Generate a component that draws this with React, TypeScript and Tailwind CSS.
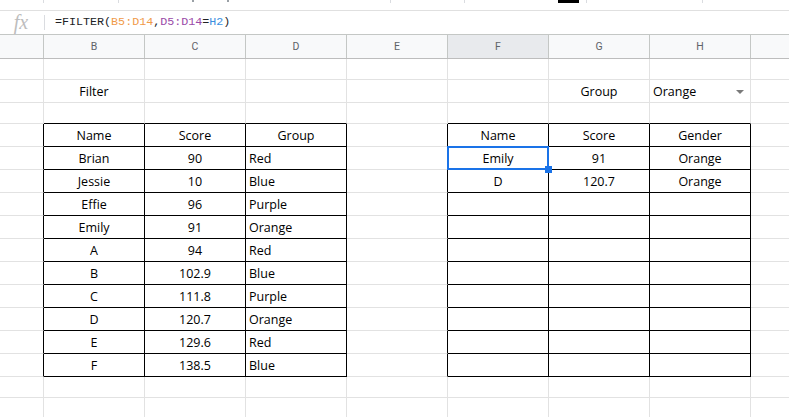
import React from "react";

const COLS = ["", "B", "C", "D", "E", "F", "G", "H", ""];
const GRID = "grid grid-cols-[44px_101px_101px_101px_101px_101px_101px_101px_1fr]";

type Cell = { text?: string; align?: "center" | "left"; dropdown?: boolean; selected?: boolean };

const names = ["Brian", "Jessie", "Effie", "Emily", "A", "B", "C", "D", "E", "F"];
const scores = ["90", "10", "96", "91", "94", "102.9", "111.8", "120.7", "129.6", "138.5"];
const groups = ["Red", "Blue", "Purple", "Orange", "Red", "Blue", "Purple", "Orange", "Red", "Blue"];

function buildRows() {
  const rows: { n: number; h: string; cells: Cell[] }[] = [];
  for (let n = 1; n <= 16; n++) {
    const cells: Cell[] = Array.from({ length: 9 }, () => ({}));
    if (n === 2) {
      cells[1] = { text: "Filter", align: "center" };
      cells[6] = { text: "Group", align: "center" };
      cells[7] = { text: "Orange", align: "left", dropdown: true };
    }
    if (n === 4) {
      cells[1] = { text: "Name", align: "center" };
      cells[2] = { text: "Score", align: "center" };
      cells[3] = { text: "Group", align: "center" };
      cells[5] = { text: "Name", align: "center" };
      cells[6] = { text: "Score", align: "center" };
      cells[7] = { text: "Gender", align: "center" };
    }
    if (n >= 5 && n <= 14) {
      const i = n - 5;
      cells[1] = { text: names[i], align: "center" };
      cells[2] = { text: scores[i], align: "center" };
      cells[3] = { text: groups[i], align: "left" };
    }
    if (n === 5) {
      cells[5] = { text: "Emily", align: "center", selected: true };
      cells[6] = { text: "91", align: "center" };
      cells[7] = { text: "Orange", align: "center" };
    }
    if (n === 6) {
      cells[5] = { text: "D", align: "center" };
      cells[6] = { text: "120.7", align: "center" };
      cells[7] = { text: "Orange", align: "center" };
    }
    const h = n === 2 || (n >= 4 && n <= 14) ? "h-[23px]" : "h-[21px]";
    rows.push({ n, h, cells });
  }
  return rows;
}

const rows = buildRows();

export default function App() {
  return (
    <div className="w-[789px] h-[417px] overflow-hidden bg-white font-['Open_Sans',sans-serif] text-black">
      {/* top toolbar remnants */}
      <div className="h-[10px] flex items-start">
        <div className="w-[44px] h-[3px] border-r border-[#dadce0]" />
        <div className="w-[75px] h-[3px] border-r border-[#dadce0]" />
        <div className="w-[73px] h-[3px]" />
        <div className="w-[2px] h-[2px] bg-[#9aa0a6]" />
        <div className="w-[33px] h-[3px]" />
        <div className="w-[2px] h-[2px] bg-[#9aa0a6]" />
        <div className="w-[162px] h-[3px] border-r border-[#dadce0]" />
        <div className="w-[74px] h-[3px] border-r border-[#dadce0]" />
        <div className="w-[93px] h-[3px]" />
        <div className="w-[21px] h-[3px] bg-black" />
        <div className="w-[8px] h-[3px] border-r border-[#dadce0]" />
        <div className="w-[116px] h-[3px] border-r border-[#dadce0]" />
      </div>

      {/* formula bar */}
      <div className="h-[24px] border-t border-[#e0e0e0] flex items-center">
        <div className="w-[44px] flex items-center justify-center">
          <span className="font-['Liberation_Serif',serif] italic text-[20px] leading-none text-[#bdbdbd] -mt-[2px] pr-[2px]">fx</span>
        </div>
        <div className="w-px h-[15px] bg-[#dadce0]" />
        <div className="pl-[10px] font-['Liberation_Mono',monospace] text-[11.7px] text-[#202124] whitespace-pre">
          <span>=FILTER(</span>
          <span className="text-[#f09a48]">B5:D14</span>
          <span>,</span>
          <span className="text-[#9a4aa8]">D5:D14</span>
          <span>=</span>
          <span className="text-[#3b8fe0]">H2</span>
          <span>)</span>
        </div>
      </div>

      {/* column headers */}
      <div className={`${GRID} h-[25px] border-t border-b border-t-[#c4c7c5] border-b-[#bdbdbd] bg-[#f8f9fa]`}>
        {COLS.map((c, i) => (
          <div
            key={i}
            className={`flex items-center justify-center font-['Roboto',sans-serif] text-[10.5px] text-[#5f6368] ${
              i < 8 ? "border-r border-[#c4c7c5]" : ""
            } ${i === 5 ? "bg-[#e8eaed]" : ""}`}
          >
            {c}
          </div>
        ))}
      </div>

      {/* body */}
      {rows.map((r) => (
        <div key={r.n} className={`${GRID} ${r.h}`}>
          {r.cells.map((cell, ci) => {
            const blackRight = r.n >= 4 && r.n <= 14 && ci <= 7;
            const blackBottom = r.n >= 3 && r.n <= 14 && [1, 2, 3, 5, 6, 7].includes(ci);
            return (
              <div
                key={ci}
                className={`relative flex items-center pt-[2px] text-[12.5px] leading-none ${
                  cell.align === "left" ? "justify-start pl-[3px]" : "justify-center"
                } border-b ${blackBottom ? "border-b-black" : "border-b-[#e2e2e2]"} ${
                  ci < 8 ? (blackRight ? "border-r border-r-black" : "border-r border-r-[#e2e2e2]") : ""
                }`}
              >
                <span className="whitespace-nowrap">{cell.text}</span>
                {cell.dropdown && (
                  <svg className="absolute right-[6px] top-[10px]" width="8" height="4" viewBox="0 0 8 4">
                    <path d="M0 0 L8 0 L4 4 Z" fill="#7a7a7a" />
                  </svg>
                )}
                {cell.selected && (
                  <>
                    <div className="absolute -inset-[1px] border-2 border-[#1a73e8] z-10 pointer-events-none" />
                    <div className="absolute right-[-4px] bottom-[-4px] w-[7px] h-[7px] bg-[#1a73e8] z-20" />
                  </>
                )}
              </div>
            );
          })}
        </div>
      ))}
    </div>
  );
}
